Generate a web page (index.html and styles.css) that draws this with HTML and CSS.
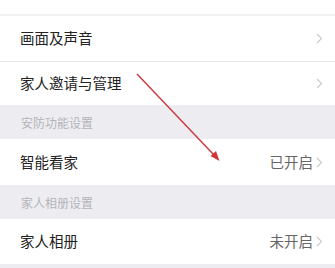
FILE: index.html
```html
<!DOCTYPE html>
<html lang="zh">
<head>
<meta charset="utf-8">
<link rel="stylesheet" href="styles.css">
</head>
<body>
<div class="page">
  <div class="top-space"></div>
  <div class="row first">
    <span class="label">画面及声音</span>
    <span class="right"><span class="chev"><svg width="7" height="11" viewBox="0 0 7 11"><path d="M1 1 L5.5 5.5 L1 10" fill="none" stroke="#c8c8c8" stroke-width="1.1"/></svg></span></span>
  </div>
  <div class="row second">
    <span class="label">家人邀请与管理</span>
    <span class="right"><span class="chev"><svg width="7" height="11" viewBox="0 0 7 11"><path d="M1 1 L5.5 5.5 L1 10" fill="none" stroke="#c8c8c8" stroke-width="1.1"/></svg></span></span>
  </div>
  <div class="header">安防功能设置</div>
  <div class="row third">
    <span class="label">智能看家</span>
    <span class="right"><span class="value">已开启</span><span class="chev"><svg width="7" height="11" viewBox="0 0 7 11"><path d="M1 1 L5.5 5.5 L1 10" fill="none" stroke="#c8c8c8" stroke-width="1.1"/></svg></span></span>
  </div>
  <div class="header">家人相册设置</div>
  <div class="row fourth">
    <span class="label">家人相册</span>
    <span class="right"><span class="value">未开启</span><span class="chev"><svg width="7" height="11" viewBox="0 0 7 11"><path d="M1 1 L5.5 5.5 L1 10" fill="none" stroke="#c8c8c8" stroke-width="1.1"/></svg></span></span>
  </div>
  <div class="bottom"></div>
  <svg class="arrow" width="335" height="268" viewBox="0 0 335 268">
    <line x1="137" y1="74" x2="214" y2="155" stroke="#d0343a" stroke-width="1.4"/>
    <path d="M219.5 161 L210.5 156 L216 151 Z" fill="#d0343a"/>
  </svg>
</div>
</body>
</html>
```

FILE: styles.css
```css
html, body {
  margin: 0;
  padding: 0;
  background: #ffffff;
}
.page {
  position: relative;
  width: 335px;
  height: 268px;
  overflow: hidden;
  font-family: "Noto Sans CJK SC", "Noto Sans", sans-serif;
}
.top-space {
  height: 14px;
  border-bottom: 2px solid #f1f1f3;
}
.row {
  box-sizing: border-box;
  display: flex;
  align-items: center;
  justify-content: space-between;
  padding: 0 12px 0 20px;
  background: #ffffff;
}
.row.first {
  height: 46px;
  border-bottom: 1px solid #e6e6e8;
}
.row.second {
  height: 43px;
}
.row.third {
  height: 46px;
}
.row.fourth {
  height: 45px;
}
.label {
  font-size: 14.5px;
  color: #222222;
  line-height: 1;
}
.right {
  display: flex;
  align-items: center;
  gap: 3px;
}
.value {
  font-size: 14.5px;
  color: #666666;
  line-height: 1;
}
.chev {
  display: flex;
  align-items: center;
}
.header {
  height: 34px;
  background: #ededf1;
  display: flex;
  align-items: center;
  padding-left: 21px;
  font-size: 12px;
  color: #b4b4b8;
}
.bottom {
  height: 10px;
  background: #ededf1;
}
.arrow {
  position: absolute;
  left: 0;
  top: 0;
  pointer-events: none;
}
```
